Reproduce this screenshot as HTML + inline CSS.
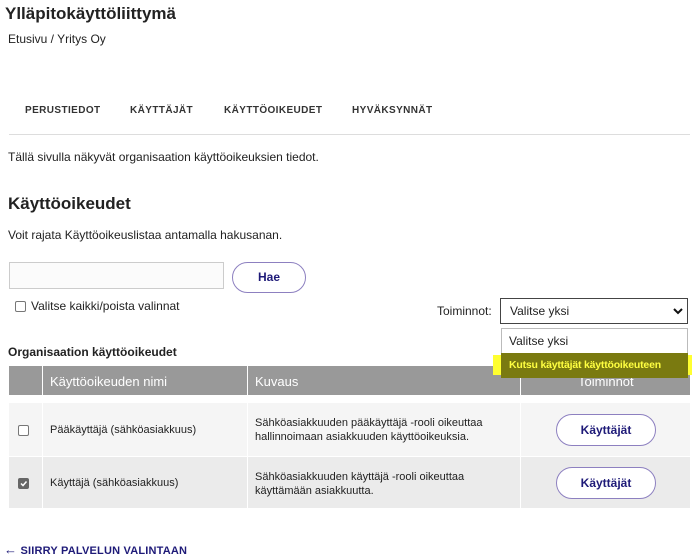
<!DOCTYPE html><html><head><meta charset="utf-8"><style>
body{margin:0;width:697px;height:554px;position:relative;font-family:"Liberation Sans",Arial,sans-serif;color:#222;background:#fff;overflow:hidden}
.a{position:absolute;white-space:nowrap}
.tab{font-size:10px;font-weight:bold;letter-spacing:.4px;color:#333;top:105px}
.btn{position:absolute;border:1.5px solid #8d80c0;border-radius:16px;background:#fff;color:#1e1a78;font-weight:bold;font-size:12px;text-align:center;box-sizing:border-box}
.cell{position:absolute;font-size:11px;color:#222;line-height:14px}
.cb{position:absolute;width:9px;height:9px;border:1px solid #777;border-radius:2px;background:#fff}
</style></head><body>
<div class="a" style="left:5px;top:4px;font-size:17px;font-weight:bold">Ylläpitokäyttöliittymä</div>
<div class="a" style="left:8px;top:32px;font-size:12px">Etusivu / Yritys Oy</div>
<div class="a tab" style="left:25px">PERUSTIEDOT</div>
<div class="a tab" style="left:130px">KÄYTTÄJÄT</div>
<div class="a tab" style="left:224px">KÄYTTÖOIKEUDET</div>
<div class="a tab" style="left:352px">HYVÄKSYNNÄT</div>
<div class="a" style="left:9px;top:134px;width:681px;height:1px;background:#ddd"></div>
<div class="a" style="left:8px;top:150px;font-size:12px">Tällä sivulla näkyvät organisaation käyttöoikeuksien tiedot.</div>
<div class="a" style="left:8px;top:194px;font-size:17px;font-weight:bold">Käyttöoikeudet</div>
<div class="a" style="left:8px;top:228px;font-size:12px">Voit rajata Käyttöoikeuslistaa antamalla hakusanan.</div>
<div class="a" style="left:9px;top:262px;width:215px;height:27px;border:1px solid #ccc;box-sizing:border-box;background:#fbfbfb"></div>
<div class="btn" style="left:232px;top:262px;width:74px;height:31px;line-height:28px">Hae</div>
<div class="cb" style="left:15px;top:301px"></div>
<div class="a" style="left:31px;top:299px;font-size:12px">Valitse kaikki/poista valinnat</div>
<div class="a" style="left:437px;top:304px;font-size:12px">Toiminnot:</div>
<div class="a" style="left:500px;top:298px;width:188px;height:26px;border:1px solid #444;box-sizing:border-box;font-size:12px;line-height:24px;padding-left:9px">Valitse yksi<svg style="position:absolute;right:4px;top:8px" width="10" height="8"><path d="M1 2l4 4 4-4" stroke="#111" stroke-width="2" fill="none"/></svg></div>
<div class="a" style="left:8px;top:345px;font-size:12px;font-weight:bold">Organisaation käyttöoikeudet</div>
<div class="a" style="left:9px;top:366px;width:681px;height:29px;background:#999"></div>
<div class="a" style="left:42px;top:366px;width:1px;height:142px;background:#fff"></div>
<div class="a" style="left:247px;top:366px;width:1px;height:142px;background:#fff"></div>
<div class="a" style="left:520px;top:366px;width:1px;height:142px;background:#fff"></div>
<div class="a" style="left:50px;top:374px;font-size:13px;color:#fff">Käyttöoikeuden nimi</div>
<div class="a" style="left:255px;top:374px;font-size:13px;color:#fff">Kuvaus</div>
<div class="a" style="left:578px;top:374px;font-size:13px;color:#fff">Toiminnot</div>
<div class="a" style="left:9px;top:403px;width:681px;height:53px;background:#f5f5f5;z-index:-1"></div>
<div class="a" style="left:9px;top:457px;width:681px;height:51px;background:#ebebeb;z-index:-1"></div>
<div class="cb" style="left:18px;top:425px"></div>
<div class="cell" style="left:50px;top:423px">Pääkäyttäjä (sähköasiakkuus)</div>
<div class="cell" style="left:255px;top:416px">Sähköasiakkuuden pääkäyttäjä -rooli oikeuttaa<br>hallinnoimaan asiakkuuden käyttöoikeuksia.</div>
<div class="btn" style="left:556px;top:414px;width:100px;height:32px;line-height:31px">Käyttäjät</div>
<div class="cb" style="left:18px;top:478px;background:#666;border-color:#666"><svg style="position:absolute;left:0;top:0" width="9" height="9"><path d="M2 4.5l2 2 3.5-4" stroke="#fff" stroke-width="1.5" fill="none"/></svg></div>
<div class="cell" style="left:50px;top:476px">Käyttäjä (sähköasiakkuus)</div>
<div class="cell" style="left:255px;top:470px">Sähköasiakkuuden käyttäjä -rooli oikeuttaa<br>käyttämään asiakkuutta.</div>
<div class="btn" style="left:556px;top:467px;width:100px;height:32px;line-height:31px">Käyttäjät</div>
<div class="a" style="left:501px;top:328px;width:187px;height:50px;border:1px solid #bbb;box-sizing:border-box;background:#fff"></div>
<div class="a" style="left:509px;top:334px;font-size:12px">Valitse yksi</div>
<div class="a" style="left:493px;top:355px;width:199px;height:20px;background:#ffff30"></div>
<div class="a" style="left:501px;top:353px;width:187px;height:25px;background:#7a7a10"></div>
<div class="a" style="left:509px;top:359px;font-size:10.5px;font-weight:bold;color:#ffff40;letter-spacing:-.2px">Kutsu käyttäjät käyttöoikeuteen</div>
<div class="a" style="left:4px;top:542px;font-size:11px;font-weight:bold;color:#1e1a78;letter-spacing:.2px"><span style="font-size:13px;font-weight:normal">←</span> SIIRRY PALVELUN VALINTAAN</div>
</body></html>
